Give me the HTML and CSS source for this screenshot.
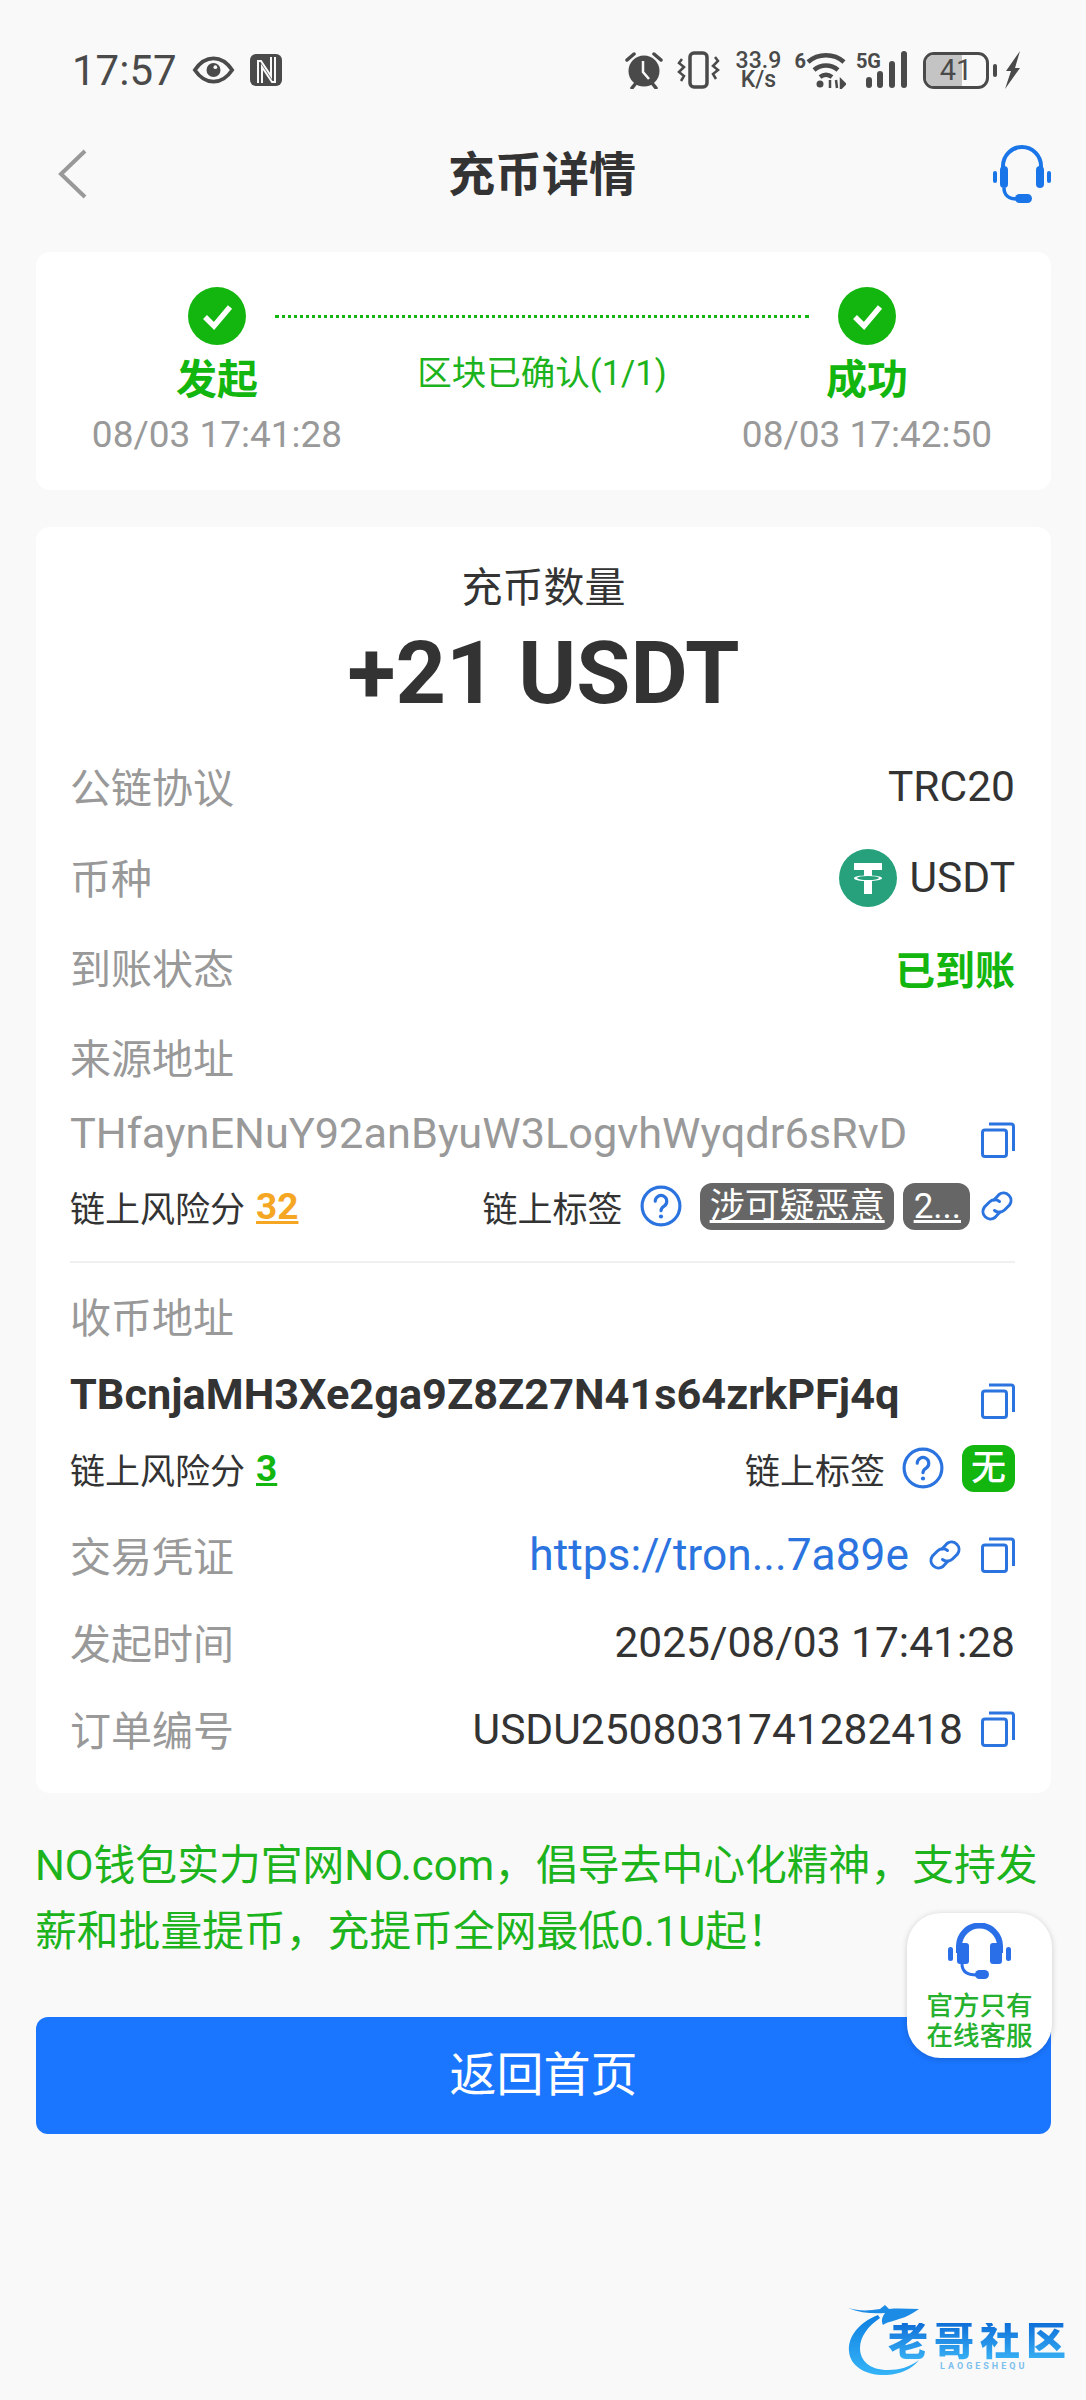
FILE: index.html
```html
<!DOCTYPE html>
<html lang="zh-CN">
<head>
<meta charset="UTF-8" />
<meta name="viewport" content="width=device-width, initial-scale=1" />
<title>充币详情</title>
<link rel="stylesheet" href="styles.css">
</head>
<body>

<!-- shared icons -->
<svg class="sprite" aria-hidden="true">
  <symbol id="i-copy" viewBox="0 0 34 36">
    <rect x="1.500" y="8" width="24" height="26.500" rx="2.500" fill="none" stroke="currentColor" stroke-width="3"/>
    <path d="M8 2h22a2.500 2.500 0 0 1 2.500 2.500V29" fill="none" stroke="currentColor" stroke-width="3"/>
  </symbol>
  <symbol id="i-link" viewBox="0 0 36 36">
    <g fill="none" stroke="currentColor" stroke-width="3" stroke-linecap="round">
      <path d="M15 12l5-5.500a7.500 7.500 0 0 1 10.500 10.500l-5 5a7.500 7.500 0 0 1-10 .5"/>
      <path d="M21 24l-5 5.500a7.500 7.500 0 0 1-10.500-10.500l5-5a7.500 7.500 0 0 1 10-.5"/>
    </g>
  </symbol>
  <symbol id="i-help" viewBox="0 0 40 40">
    <circle cx="20" cy="20" r="18" fill="none" stroke="currentColor" stroke-width="3"/>
    <path d="M14.500 15.500a5.500 5.500 0 1 1 8.500 4.600c-2 1.300-3 2.200-3 4.400" fill="none" stroke="currentColor" stroke-width="3" stroke-linecap="round"/>
    <circle cx="20" cy="30" r="2" fill="currentColor"/>
  </symbol>
  <symbol id="i-check" viewBox="0 0 58 58">
    <circle cx="29" cy="29" r="29" fill="#13b50f"/>
    <path d="M17 30l9 9 16-19" fill="none" stroke="#fff" stroke-width="5.500"/>
  </symbol>
</svg>

<div class="status-bar">
  <div class="status-left">
    <span class="clock">17:57</span>
    <svg class="st-eye" viewBox="0 0 44 30"><path d="M2 15C8 6 14 2.500 22 2.500S36 6 42 15c-6 9-12 12.500-20 12.500S8 24 2 15z" fill="none" stroke="#4a4a4a" stroke-width="4"/><circle cx="22" cy="15" r="7.500" fill="#4a4a4a"/><circle cx="24" cy="12" r="2" fill="#f9f9f9"/></svg>
    <svg class="st-nfc" viewBox="0 0 32 32"><rect width="32" height="32" rx="6" fill="#4a4a4a"/><path d="M8 29V7h3l10 15V3M12 29V13l10 15h3V3" fill="none" stroke="#f9f9f9" stroke-width="2"/></svg>
  </div>
  <div class="status-right">
    <svg class="st-alarm" viewBox="0 0 38 38"><circle cx="19" cy="20" r="15.500" fill="#4a4a4a"/><path d="M2 9l7-6M36 9l-7-6M7 37l4-5M31 37l-4-5" stroke="#4a4a4a" stroke-width="3.500" stroke-linecap="round"/><path d="M18 10v11l6 7" fill="none" stroke="#f9f9f9" stroke-width="2.500"/></svg>
    <svg class="st-vibe" viewBox="0 0 43 38"><rect x="13" y="2" width="17" height="34" rx="4" fill="none" stroke="#4a4a4a" stroke-width="3.500"/><path d="M5 8L2 12l5 4-5 5 5 4-3 5M38 6l3 4-5 5 5 4-5 4 3 5" fill="none" stroke="#4a4a4a" stroke-width="2.500"/></svg>
    <span class="st-speed">33.9<br>K/s</span>
    <span class="st-wifi">
      <span class="st-sup">6</span>
      <svg viewBox="0 0 40 38"><path d="M2 11C12 2 28 2 38 11M8 19c7-6 17-6 24 0M14 26c4-3 8-3 12 0" fill="none" stroke="#4a4a4a" stroke-width="4.500"/><circle cx="14" cy="33" r="3.500" fill="#4a4a4a"/><path d="M24 37v-8M31 37l-1-8M35 37v-8l4 4z" stroke="#4a4a4a" stroke-width="2.500" fill="#4a4a4a"/></svg>
    </span>
    <span class="st-cell">
      <span class="st-sup">5G</span>
      <svg viewBox="0 0 44 38"><rect x="1" y="26" width="6" height="11" rx="3" fill="#4a4a4a"/><rect x="12" y="20" width="6" height="17" rx="3" fill="#4a4a4a"/><rect x="24" y="10" width="6" height="27" rx="3" fill="#4a4a4a"/><rect x="36" y="0" width="6" height="37" rx="3" fill="#4a4a4a"/></svg>
    </span>
    <span class="st-battery"><span class="st-charge"></span><span class="st-level">41</span></span>
    <span class="st-nub"></span>
    <svg class="st-bolt" viewBox="0 0 17 38"><path d="M16 0L2 20h5L1 38l15-21h-5z" fill="#4a4a4a"/></svg>
  </div>
</div>

<div class="nav">
  <svg class="nav-back" viewBox="0 0 31 52"><path d="M28 3L4 26l24 23" fill="none" stroke="#999" stroke-width="4"/></svg>
  <h1 class="nav-title">充币详情</h1>
  <svg class="nav-help" viewBox="0 0 58 60">
    <path d="M10 34V22a19 19 0 0 1 38 0v12" fill="none" stroke="#1a76e8" stroke-width="4"/>
    <rect x="7" y="22" width="8" height="22" rx="4" fill="#1a76e8"/>
    <rect x="43" y="22" width="8" height="22" rx="4" fill="#1a76e8"/>
    <rect x="0" y="27" width="4" height="12" rx="2" fill="#1a76e8"/>
    <rect x="54" y="27" width="4" height="12" rx="2" fill="#1a76e8"/>
    <path d="M11 44c0 7 5 11 13 11" fill="none" stroke="#1a76e8" stroke-width="3.500"/>
    <rect x="22" y="50" width="17" height="9" rx="4.500" fill="#1a76e8"/>
  </svg>
</div>

<div class="card progress">
  <div class="step">
    <svg class="step-icon"><use href="#i-check"/></svg>
    <div class="step-name">发起</div>
    <div class="step-time">08/03 17:41:28</div>
  </div>
  <div class="step-mid">
    <div class="step-line"></div>
    <div class="step-note">区块已确认(1/1)</div>
  </div>
  <div class="step">
    <svg class="step-icon"><use href="#i-check"/></svg>
    <div class="step-name">成功</div>
    <div class="step-time">08/03 17:42:50</div>
  </div>
</div>

<div class="card detail">
  <div class="amount-label">充币数量</div>
  <div class="amount">+21 USDT</div>

  <div class="row row-first">
    <span class="label">公链协议</span>
    <span class="value">TRC20</span>
  </div>
  <div class="row">
    <span class="label">币种</span>
    <span class="value coin">
      <svg class="coin-icon" viewBox="0 0 58 58">
        <circle cx="29" cy="29" r="29" fill="#26a17b"/>
        <path d="M15 14h28v7H33v5.500c6 .3 10 1.400 10 2.700s-4 2.400-10 2.700V45h-8V32c-6-.3-10-1.400-10-2.800s4-2.400 10-2.700V21H15z" fill="#fff"/>
        <ellipse cx="29" cy="29" rx="11" ry="2" fill="#26a17b"/>
      </svg>
      USDT
    </span>
  </div>
  <div class="row">
    <span class="label">到账状态</span>
    <span class="value done">已到账</span>
  </div>
  <div class="row">
    <span class="label">来源地址</span>
  </div>
  <div class="row row-addr">
    <span class="addr">THfaynENuY92anByuW3LogvhWyqdr6sRvD</span>
    <svg class="ico ico-addr"><use href="#i-copy"/></svg>
  </div>
  <div class="row row-risk">
    <span class="risk">链上风险分 <b class="score warn">32</b></span>
    <span class="tags">
      链上标签
      <svg class="ico-help"><use href="#i-help"/></svg>
      <span class="tag">涉可疑恶意</span>
      <span class="tag tag-more">2...</span>
      <svg class="ico ico-link"><use href="#i-link"/></svg>
    </span>
  </div>
  <div class="divider"></div>
  <div class="row">
    <span class="label">收币地址</span>
  </div>
  <div class="row row-addr row-addr-to">
    <span class="addr addr-to">TBcnjaMH3Xe2ga9Z8Z27N41s64zrkPFj4q</span>
    <svg class="ico ico-addr"><use href="#i-copy"/></svg>
  </div>
  <div class="row row-risk row-risk-to">
    <span class="risk">链上风险分 <b class="score safe">3</b></span>
    <span class="tags">
      链上标签
      <svg class="ico-help"><use href="#i-help"/></svg>
      <span class="tag tag-none">无</span>
    </span>
  </div>
  <div class="row row-short">
    <span class="label">交易凭证</span>
    <span class="value with-icons">
      <span class="link-text">https://tron...7a89e</span>
      <svg class="ico ico-link"><use href="#i-link"/></svg>
      <svg class="ico"><use href="#i-copy"/></svg>
    </span>
  </div>
  <div class="row row-short">
    <span class="label">发起时间</span>
    <span class="value">2025/08/03 17:41:28</span>
  </div>
  <div class="row row-short">
    <span class="label">订单编号</span>
    <span class="value with-icons">
      USDU2508031741282418
      <svg class="ico"><use href="#i-copy"/></svg>
    </span>
  </div>
</div>

<p class="notice">NO钱包实力官网NO.com，倡导去中心化精神，支持发薪和批量提币，充提币全网最低0.1U起！</p>

<button class="home-btn">返回首页</button>

<!-- 悬浮客服 -->
<div class="float-help">
  <svg viewBox="0 0 63 57">
    <path d="M11 30V23a20.500 20.500 0 0 1 41 0v7" fill="none" stroke="#2a6fe8" stroke-width="6"/>
    <rect x="9" y="20" width="12" height="21" rx="3" fill="#2a6fe8"/>
    <rect x="42" y="20" width="12" height="21" rx="3" fill="#2a6fe8"/>
    <rect x="0" y="24" width="5" height="14" rx="2.500" fill="#2a6fe8"/>
    <rect x="58" y="24" width="5" height="14" rx="2.500" fill="#2a6fe8"/>
    <path d="M14 41c0 7 5 11 15 11" fill="none" stroke="#2a6fe8" stroke-width="3"/>
    <rect x="27" y="47" width="14" height="9" rx="4.500" fill="#2a6fe8"/>
  </svg>
  <div class="float-text">官方只有<br>在线客服</div>
</div>

<!-- 社区水印 -->
<div class="mark">
  <svg class="mark-dragon" viewBox="0 0 90 72">
    <defs>
      <linearGradient id="mark-blue" x1="0" y1="0" x2="0" y2="1">
        <stop offset="0" stop-color="#0f7fe0"/>
        <stop offset="1" stop-color="#35b4f8"/>
      </linearGradient>
    </defs>
    <path d="M30 10C10 18 0 32 1 46c1 16 18 25 38 24 14-1 25-6 32-15-9 7-20 10-31 10C22 65 12 56 12 43c0-11 8-22 20-30z" fill="url(#mark-blue)"/>
    <path d="M0 3c10 3 20 3 32 1l5-4 4 4c10-1 20 0 30 0-6 4-12 8-20 10-8 3-12 3-16 6-2-4-1-8 2-12C26 9 12 8 0 3z" fill="#1c8be6"/>
  </svg>
  <div class="mark-name">老哥社区</div>
  <div class="mark-sub">LAOGESHEQU</div>
</div>

</body>
</html>
```

FILE: styles.css
```css
/* --- Page --- */
body {
  margin: 0;
  padding: 0 35px 0 36px;
  background-color: #f9f9f9;
  color: #333;
  font-family: Roboto, "Noto Sans CJK SC", sans-serif;
  position: relative;
  height: 2400px;
  overflow: hidden;
}
.sprite {
  display: none;
}

/* Status bar */
.status-bar {
  height: 60px;
  margin: 40px -1px 0 37px;
  padding-right: 31px;
  display: flex;
  align-items: center;
  justify-content: space-between;
  color: #4a4a4a;
}
.status-left,
.status-right {
  display: flex;
  align-items: center;
}
.clock {
  font-size: 42px;
  margin-left: -1px;
}
.st-eye {
  width: 43px;
  height: 28px;
  margin-left: 15px;
}
.st-nfc {
  width: 32px;
  height: 32px;
  margin-left: 15px;
}
.status-right svg {
  display: block;
}
.st-alarm {
  width: 38px;
  height: 38px;
}
.st-vibe {
  width: 43px;
  height: 38px;
  margin-left: 14px;
}
.st-speed {
  width: 46px;
  margin-left: 15px;
  font-size: 23px;
  line-height: 19px;
  text-align: center;
  font-weight: 500;
}
.st-wifi,
.st-cell {
  display: flex;
  align-items: flex-start;
  height: 38px;
}
.st-wifi {
  margin-left: 13px;
}
.st-wifi svg {
  width: 40px;
  height: 38px;
}
.st-cell {
  margin-left: 10px;
}
.st-cell svg {
  width: 44px;
  height: 38px;
  margin-left: -16px;
}
.st-sup {
  font-size: 20px;
  line-height: 20px;
  font-weight: 700;
}
.st-battery {
  width: 66px;
  height: 37px;
  margin-left: 14px;
  box-sizing: border-box;
  border: 3px solid #4a4a4a;
  border-radius: 11px;
  position: relative;
  overflow: hidden;
  display: flex;
  align-items: center;
  justify-content: center;
}
.st-charge {
  position: absolute;
  left: 0;
  top: 0;
  bottom: 0;
  width: 60%;
  background-color: #c4c4c4;
}
.st-level {
  position: relative;
  font-size: 29px;
  line-height: 1;
}
.st-nub {
  width: 4px;
  height: 13px;
  margin-left: 4px;
  border-radius: 2px;
  background-color: #4a4a4a;
}
.st-bolt {
  width: 17px;
  height: 38px;
  margin-left: 7px;
}

/* Header */
.nav {
  height: 100px;
  margin-top: 24px;
  display: flex;
  align-items: center;
  justify-content: space-between;
}
.nav-back {
  width: 31px;
  height: 52px;
  margin-left: 21px;
}
.nav-title {
  margin: 0 0 8px 3px;
  font-size: 47px;
  font-weight: 700;
  color: #333;
}
.nav-help {
  width: 58px;
  height: 60px;
  margin-top: -1px;
}

/* Cards */
.card {
  background-color: #fff;
  border-radius: 14px;
}
.progress {
  height: 238px;
  margin-top: 28px;
  padding: 0 126px 0 123px;
  display: flex;
}
.step {
  width: 116px;
  flex-shrink: 0;
  display: flex;
  flex-direction: column;
  align-items: center;
  white-space: nowrap;
}
.step-icon {
  width: 58px;
  height: 58px;
  margin-top: 35px;
}
.step-name {
  font-size: 41px;
  line-height: 56px;
  margin-top: 7px;
  font-weight: 700;
  color: #13b50f;
}
.step-time {
  font-size: 37px;
  line-height: 44px;
  margin-top: 5px;
  color: #999;
}
.step-mid {
  flex: 1;
  text-align: center;
}
.step-line {
  margin-top: 63px;
  border-top: 3px dotted #13b50f;
}
.step-note {
  margin-top: 32px;
  font-size: 34.500px;
  line-height: 46px;
  color: #1cb31c;
}

.detail {
  margin-top: 37px;
  height: 1266px;
  padding: 0 36px 0 34px;
  box-sizing: border-box;
}
.amount-label {
  padding-top: 31px;
  font-size: 41px;
  line-height: 60px;
  text-align: center;
  margin-left: 2px;
}
.amount {
  margin: 5px 0 15px 2px;
  font-size: 88px;
  line-height: 100px;
  font-weight: 700;
  text-align: center;
}

/* Rows */
.row {
  height: 90px;
  display: flex;
  align-items: center;
  justify-content: space-between;
}
.row-first {
  height: 93px;
}
.row-short {
  height: 87px;
}
.row-addr {
  height: 61px;
}
.row-addr-to {
  height: 65px;
}
.row-risk {
  height: 88px;
}
.row-risk-to {
  height: 86px;
}
.label {
  font-size: 41px;
  color: #999;
}
.row-short .label {
  margin-bottom: 2px;
}
.value {
  font-size: 42.500px;
  color: #333;
  display: flex;
  align-items: center;
  margin-top: 3px;
}
.row-short .value {
  margin-top: 1px;
}
.coin-icon {
  width: 58px;
  height: 58px;
  margin-right: 13px;
}
.done {
  font-size: 40px;
  font-weight: 700;
  color: #13b50f;
}
.with-icons .ico {
  margin-left: 18px;
}
.link-text {
  font-size: 44.300px;
  color: #2b74e0;
}
.addr {
  font-size: 43.300px;
  color: #999;
  margin-top: 4px;
}
.addr-to {
  font-weight: 700;
  color: #333;
}
.ico {
  width: 34px;
  height: 36px;
  color: #2b74e0;
  flex-shrink: 0;
}
.ico-addr {
  margin-top: 16px;
}
.ico-link {
  width: 36px;
  height: 36px;
}
.ico-help {
  width: 42px;
  height: 42px;
  margin: 0 18px 0 17px;
  color: #2b74e0;
}
.risk,
.tags {
  font-size: 35px;
  color: #333;
  display: flex;
  align-items: center;
}
.score {
  margin-left: 11px;
  text-decoration: underline;
  font-weight: 700;
  font-size: 37px;
}
.warn {
  color: #f5a623;
}
.safe {
  color: #13b50f;
}
.tag {
  height: 47px;
  padding: 0 9px 0 10px;
  margin-right: 9px;
  border-radius: 12px;
  background-color: #666;
  color: #fff;
  line-height: 47px;
  text-decoration: underline;
}
.tag-more {
  padding: 0 9px 0 11px;
}
.tag-none {
  margin-right: 0;
  padding: 0 9px;
  background-color: #13b50f;
  text-decoration: none;
  font-weight: 500;
}
.divider {
  height: 2px;
  margin: 11px 0 7px;
  background-color: #f0f0f0;
}

/* Footer */
.notice {
  margin: 40px 0 0;
  font-size: 41.800px;
  line-height: 66px;
  color: #1cb31c;
  margin-left: -1px;
}
.home-btn {
  display: block;
  width: 100%;
  height: 117px;
  margin-top: 52px;
  padding-bottom: 12px;
  border: none;
  border-radius: 12px;
  background-color: #1a76ff;
  color: #fff;
  font-family: inherit;
  font-size: 47px;
}

/* Floating help button */
.float-help {
  position: absolute;
  left: 907px;
  top: 1913px;
  width: 145px;
  height: 145px;
  border-radius: 34px;
  background-color: #fff;
  box-shadow: 0 1px 6px rgba(0, 0, 0, 0.18);
  text-align: center;
}
.float-help svg {
  display: block;
  width: 63px;
  height: 57px;
  margin: 10px auto 0;
}
.float-text {
  margin-top: 11px;
  font-size: 26.500px;
  line-height: 30px;
  font-weight: 500;
  color: #25b12e;
}

/* Community watermark */
.mark {
  position: absolute;
  left: 848px;
  top: 2305px;
  width: 222px;
  height: 72px;
}
.mark-dragon {
  width: 90px;
  height: 72px;
  display: block;
}
.mark-name {
  position: absolute;
  left: 40px;
  top: 18px;
  font-size: 40px;
  line-height: 38px;
  letter-spacing: 6px;
  font-weight: 900;
  white-space: nowrap;
  background: linear-gradient(#0f6fd8, #39b2f5);
  -webkit-background-clip: text;
  background-clip: text;
  color: transparent;
}
.mark-sub {
  position: absolute;
  left: 92px;
  top: 56px;
  font-size: 9px;
  line-height: 11px;
  letter-spacing: 3px;
  font-weight: 700;
  color: #7cc0ee;
}
```
